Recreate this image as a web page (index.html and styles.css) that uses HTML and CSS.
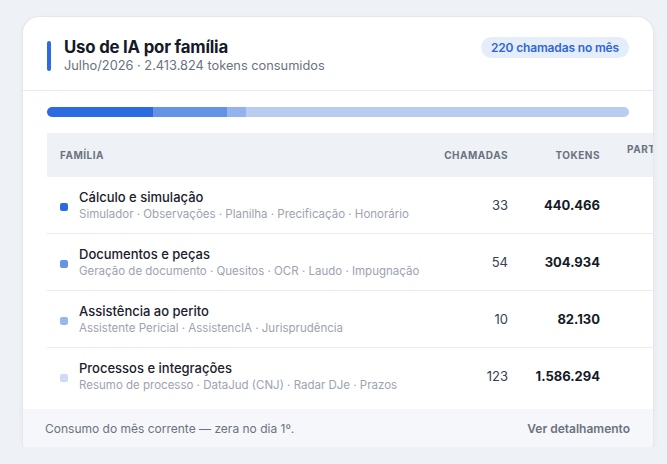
FILE: index.html
```html
<!DOCTYPE html>
<html lang="pt-BR">
<head>
<meta charset="utf-8">
<title>Uso de IA por família</title>
<link rel="stylesheet" href="styles.css">
</head>
<body>
<section class="card">
  <header class="card-head">
    <div class="head-left">
      <span class="accent"></span>
      <div class="titles">
        <h1 class="title">Uso de IA por família</h1>
        <p class="subtitle">Julho/2026 · 2.413.824 tokens consumidos</p>
      </div>
    </div>
    <span class="badge">220 chamadas no mês</span>
  </header>

  <div class="bar">
    <span class="seg seg1" style="width:18.25%"></span>
    <span class="seg seg2" style="width:12.63%"></span>
    <span class="seg seg3" style="width:3.40%"></span>
    <span class="seg seg4" style="width:65.72%"></span>
  </div>

  <div class="table-wrap">
    <table class="tbl">
      <colgroup>
        <col class="c-fam"><col class="c-cha"><col class="c-tok"><col class="c-part">
      </colgroup>
      <thead>
        <tr>
          <th class="th-left">Família</th>
          <th>Chamadas</th>
          <th>Tokens</th>
          <th class="th-part">Participação<br>%</th>
        </tr>
      </thead>
      <tbody>
        <tr>
          <td class="fam"><span class="dot d1"></span><div><div class="name">Cálculo e simulação</div><div class="desc">Simulador · Observações · Planilha · Precificação · Honorário</div></div></td>
          <td class="num">33</td>
          <td class="tok">440.466</td>
          <td class="part">18,2%</td>
        </tr>
        <tr>
          <td class="fam"><span class="dot d2"></span><div><div class="name">Documentos e peças</div><div class="desc">Geração de documento · Quesitos · OCR · Laudo · Impugnação</div></div></td>
          <td class="num">54</td>
          <td class="tok">304.934</td>
          <td class="part">12,6%</td>
        </tr>
        <tr>
          <td class="fam"><span class="dot d3"></span><div><div class="name">Assistência ao perito</div><div class="desc">Assistente Pericial · AssistencIA · Jurisprudência</div></div></td>
          <td class="num">10</td>
          <td class="tok">82.130</td>
          <td class="part">3,4%</td>
        </tr>
        <tr>
          <td class="fam"><span class="dot d4"></span><div><div class="name">Processos e integrações</div><div class="desc">Resumo de processo · DataJud (CNJ) · Radar DJe · Prazos</div></div></td>
          <td class="num">123</td>
          <td class="tok">1.586.294</td>
          <td class="part">65,7%</td>
        </tr>
      </tbody>
    </table>
  </div>

  <footer class="card-foot">
    <span class="foot-note">Consumo do mês corrente — zera no dia 1º.</span>
    <a class="foot-link" href="#">Ver detalhamento</a>
  </footer>
</section>
</body>
</html>
```

FILE: styles.css
```css
* { box-sizing: border-box; }

html, body {
  margin: 0;
  padding: 0;
  background: #eef1f5;
  font-family: Inter, "Noto Sans", "Liberation Sans", sans-serif;
  color: #111827;
}

.card {
  width: 630px;
  margin: 17px 0 0 23px;
  background: #ffffff;
  border-radius: 16px 16px 3px 3px;
  box-shadow: 0 0 0 1px #e4e8ee, 0 2px 6px rgba(30, 41, 59, 0.06);
  overflow: hidden;
}

.card-head {
  display: flex;
  justify-content: space-between;
  align-items: flex-start;
  padding: 20px 24px 15px 24px;
  border-bottom: 1px solid #e6e9ee;
}

.head-left {
  display: flex;
  gap: 13px;
}

.accent {
  width: 4px;
  height: 30px;
  margin-top: 4px;
  border-radius: 2px;
  background: #2f6be0;
}

.title {
  margin: 0;
  font-size: 16.8px;
  line-height: 20px;
  font-weight: 700;
  color: #141a26;
  letter-spacing: -0.2px;
}

.subtitle {
  margin: 0;
  font-size: 12.8px;
  line-height: 18px;
  color: #6b7280;
}

.badge {
  height: 21px;
  line-height: 21px;
  padding: 0 10px;
  border-radius: 11px;
  background: #e5edfb;
  color: #2f67d3;
  font-size: 12px;
  font-weight: 600;
  letter-spacing: -0.15px;
}

.bar {
  display: flex;
  height: 10px;
  margin: 16px 24px 16px 24px;
  border-radius: 5px;
  overflow: hidden;
}

.seg { display: block; height: 100%; }
.seg1 { background: #2c6ae0; }
.seg2 { background: #6392e6; }
.seg3 { background: #93b2ee; }
.seg4 { background: #b9cdf2; }

.table-wrap {
  margin-left: 24px;
  padding-bottom: 5px;
  overflow: hidden;
}

.tbl {
  table-layout: fixed;
  border-collapse: collapse;
  width: 700px;
}

.c-fam { width: 384px; }
.c-cha { width: 90px; }
.c-tok { width: 92px; }
.c-part { width: 134px; }

.tbl thead tr { background: #eef1f6; }

.tbl th {
  height: 44px;
  padding: 0 13px;
  font-size: 10px;
  line-height: 12px;
  font-weight: 700;
  letter-spacing: 0.5px;
  text-transform: uppercase;
  color: #6b7280;
  text-align: right;
}

.tbl th.th-left { text-align: left; }
.tbl th.th-part { text-align: right; padding: 0 40px 0 6px; }

.tbl tbody tr { border-bottom: 1px solid #e8ebf0; }
.tbl tbody tr:last-child { border-bottom: none; }

.tbl td {
  height: 56px;
  padding: 0 13px;
  vertical-align: middle;
}

.fam {
  display: flex;
  align-items: center;
  gap: 11px;
  height: 56px;
}

.dot {
  flex: none;
  width: 8px;
  height: 8px;
  border-radius: 2px;
  margin-top: 4px;
}
.d1 { background: #2c6ae0; }
.d2 { background: #6392e6; }
.d3 { background: #9ab6f0; }
.d4 { background: #cddbf7; }

.name {
  font-size: 13px;
  line-height: 17px;
  font-weight: 500;
  color: #1a202c;
}

.desc {
  font-size: 11.5px;
  line-height: 16px;
  color: #9ca3af;
  white-space: nowrap;
}

.num {
  text-align: right;
  font-size: 13px;
  color: #374151;
}

.tok {
  text-align: right;
  font-size: 13px;
  font-weight: 700;
  color: #141a26;
}

.part {
  text-align: right;
  font-size: 13px;
  color: #374151;
  padding-right: 40px;
}

.card-foot {
  display: flex;
  justify-content: space-between;
  align-items: center;
  height: 38px;
  padding: 0 23px 0 22px;
  background: #f5f7fa;
}

.foot-note {
  font-size: 12px;
  color: #6b7280;
}

.foot-link {
  font-size: 12px;
  font-weight: 600;
  color: #6b7280;
  text-decoration: none;
}
```
